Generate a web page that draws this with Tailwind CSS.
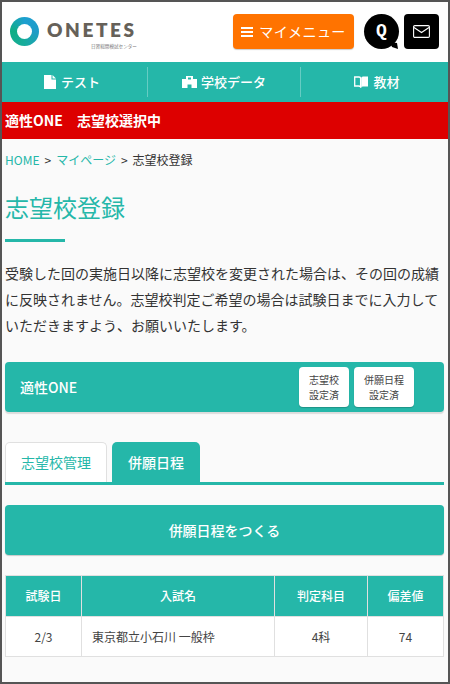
<!DOCTYPE html>
<html lang="ja">
<head>
    <meta charset="UTF-8">
    <meta name="viewport" content="width=device-width, initial-scale=1.0">
    <title>志望校登録</title>
    <script src="https://cdn.jsdelivr.net/npm/@tailwindcss/browser@4"></script>
</head>

<body class="bg-[#fafafa]">
    <div class="h-[684px] overflow-hidden border-2 border-[#555555] bg-[#fafafa] text-[#333333] font-['Noto_Sans_CJK_JP','Noto_Sans',sans-serif]">

        <!-- header -->
        <header class="h-[60px] bg-white flex items-center pl-[8px] pr-[9px]">
            <div class="flex items-start w-[223px]">
                <div class="w-[29px] h-[29px] rounded-full bg-[conic-gradient(#1d9fd0,#1f9cc8,#17ac9c,#10ae84,#1d9fd0)] flex items-center justify-center mt-[1px]">
                    <div class="w-[15px] h-[15px] rounded-full bg-white"></div>
                </div>
                <div class="ml-[8px] flex flex-col">
                    <span class="text-[#666159] font-extrabold text-[19px] leading-[28px] tracking-[2.6px] font-['Lato','Noto_Sans',sans-serif]">ONETES</span>
                    <span class="text-[#777777] text-[4.6px] leading-[6px] ml-[44px] -mt-[1px] whitespace-nowrap">日習総開模試センター</span>
                </div>
            </div>
            <button class="w-[121px] h-[35px] -mt-[1px] rounded-[4px] bg-[#ff7300] shadow-[0_1px_1px_rgba(0,0,0,0.2)] text-white text-[14px] flex items-center justify-center gap-[6px]">
                <svg width="12" height="10" viewBox="0 0 12 10" fill="white"><rect width="12" height="2" y="0"/><rect width="12" height="2" y="4"/><rect width="12" height="2" y="8"/></svg>
                <span class="tracking-[0.4px]">マイメニュー</span>
            </button>
            <div class="relative w-[35px] h-[35px] ml-[10px] -mt-[1px] rounded-full bg-black text-white flex items-center justify-center font-bold text-[18px] font-['Liberation_Mono',monospace]">
                Q
                <svg class="absolute right-[1px] bottom-[0px]" width="8" height="7" viewBox="0 0 8 7" fill="black"><path d="M0 0 L7 1 L8 7 L2 5 Z"/></svg>
            </div>
            <div class="w-[35px] h-[35px] ml-[5px] -mt-[1px] rounded-[4px] bg-black flex items-center justify-center">
                <svg width="17" height="13" viewBox="0 0 17 13" fill="none" stroke="white" stroke-width="1.1"><rect x="0.6" y="0.6" width="15.8" height="11.8" rx="1.2"/><path d="M1 2.5 L8.5 7.5 L16 2.5"/></svg>
            </div>
        </header>

        <!-- nav -->
        <nav class="h-[40px] bg-[#25b7a9] text-white text-[13px] font-medium grid grid-cols-[146px_153px_1fr] items-center">
            <a class="h-[30px] flex items-center justify-center gap-[5px] pr-[5px] border-r border-white/30">
                <svg width="12" height="14" viewBox="0 0 12 14" fill="white"><path d="M0 0 H7.5 V4.5 H12 V14 H0 Z"/><path d="M8.5 0 L12 3.5 H8.5 Z"/></svg>
                <span>テスト</span>
            </a>
            <a class="h-[30px] flex items-center justify-center gap-[4px] border-r border-white/30">
                <svg width="15" height="12" viewBox="0 0 15 12" fill="white"><path d="M4 0 H11 V3 H15 V12 H9.5 V8.5 H5.5 V12 H0 V3 H4 Z M6 1.5 V3.5 H9 V1.5 Z"/></svg>
                <span>学校データ</span>
            </a>
            <a class="h-[30px] flex items-center justify-center gap-[5px] pl-[5px]">
                <svg width="14" height="12" viewBox="0 0 14 12" fill="none"><path d="M0.7 1 H5 Q6.6 1 6.6 2.5 V11 Q6 10 4.5 10 H0.7 Z" stroke="white" stroke-width="1.3"/><path d="M7.2 2 Q7.2 0.5 9 0.5 H14 V10.5 H9 Q7.6 10.5 7.2 11.5 Z" fill="white"/></svg>
                <span>教材</span>
            </a>
        </nav>

        <!-- notice -->
        <div class="h-[37px] bg-[#dd0000] text-white font-bold text-[14px] leading-[36px] pl-[3px] whitespace-pre">適性ONE　志望校選択中</div>

        <main class="pl-[3px] pr-[2px] mr-[2px]">
            <p class="mt-[12px] flex text-[12px] leading-[18px] text-[#333333]">
                <a class="text-[#25b7a9]">HOME</a><span class="mx-[5px]">&gt;</span><a class="text-[#25b7a9]">マイページ</a><span class="mx-[5px]">&gt;</span><span>志望校登録</span>
            </p>

            <h1 class="mt-[20px] text-[24px] leading-[36px] text-[#25b7a9]">志望校登録</h1>
            <div class="mt-[14px] w-[60px] h-[3px] bg-[#25b7a9]"></div>

            <p class="mt-[18px] text-[14px] leading-[26px] w-[439px]">受験した回の実施日以降に志望校を変更された場合は、その回の成績に反映されません。志望校判定ご希望の場合は試験日までに入力していただきますよう、お願いいたします。</p>

            <!-- status card -->
            <section class="mt-[24px] h-[50px] rounded-[4px] bg-[#25b7a9] shadow-[0_2px_1px_rgba(0,0,0,0.12)] flex items-center pl-[15px] pr-[30px] text-white">
                <h2 class="text-[14px] font-medium flex-1">適性ONE</h2>
                <div class="flex gap-[5px] text-[#444444] text-[10px] leading-[15px] text-center">
                    <div class="w-[50px] h-[40px] rounded-[4px] bg-white flex items-center justify-center shadow-[0_1px_1px_rgba(0,0,0,0.2)]">志望校<br>設定済</div>
                    <div class="w-[60px] h-[40px] rounded-[4px] bg-white flex items-center justify-center shadow-[0_1px_1px_rgba(0,0,0,0.2)]">併願日程<br>設定済</div>
                </div>
            </section>

            <!-- tabs -->
            <div class="mt-[30px] flex gap-[5px] border-b-[3px] border-[#25b7a9] text-[14px]">
                <a class="w-[102px] h-[40px] rounded-t-[5px] bg-white border border-b-0 border-[#e0e0e0] text-[#25b7a9] flex items-center justify-center">志望校管理</a>
                <a class="w-[88px] h-[40px] rounded-t-[5px] bg-[#25b7a9] text-white font-medium flex items-center justify-center">併願日程</a>
            </div>

            <button class="mt-[20px] w-full h-[50px] rounded-[4px] bg-[#25b7a9] shadow-[0_1px_1px_rgba(0,0,0,0.2)] text-white text-[14px] font-medium">併願日程をつくる</button>

            <!-- schedule table -->
            <table class="mt-[20px] w-full table-fixed border-collapse text-[12px]">
                <colgroup>
                    <col class="w-[76px]"><col class="w-[193px]"><col class="w-[93px]"><col>
                </colgroup>
                <thead>
                    <tr class="h-[41px] bg-[#25b7a9] text-white">
                        <th class="border border-[#e0e0e0] font-medium">試験日</th>
                        <th class="border border-[#e0e0e0] font-medium">入試名</th>
                        <th class="border border-[#e0e0e0] font-medium">判定科目</th>
                        <th class="border border-[#e0e0e0] font-medium">偏差値</th>
                    </tr>
                </thead>
                <tbody>
                    <tr class="h-[40px] bg-white text-center text-[#444444]">
                        <td class="border border-[#e0e0e0]">2/3</td>
                        <td class="border border-[#e0e0e0] text-left pl-[10px]">東京都立小石川 一般枠</td>
                        <td class="border border-[#e0e0e0]">4科</td>
                        <td class="border border-[#e0e0e0]">74</td>
                    </tr>
                </tbody>
            </table>
        </main>
    </div>
</body>
</html>
